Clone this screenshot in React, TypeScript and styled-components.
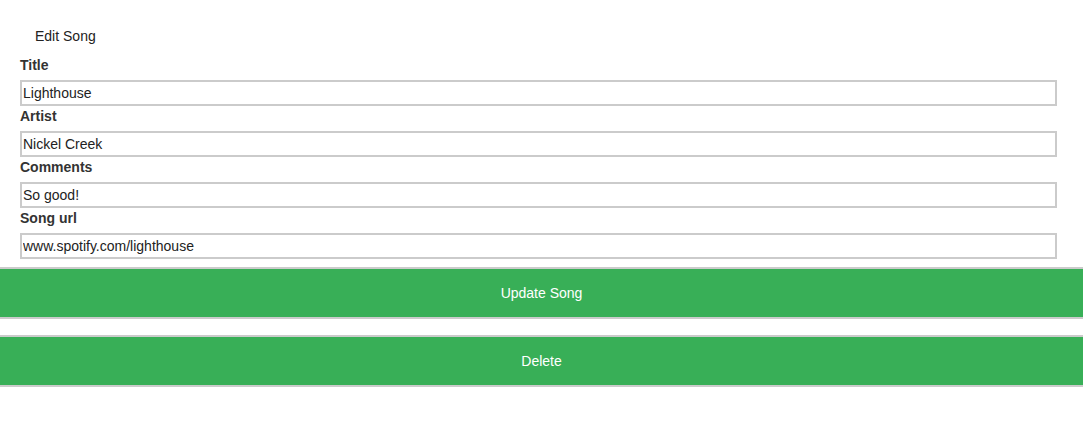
import React from "react";
import styled, { createGlobalStyle } from "styled-components";

const GlobalStyle = createGlobalStyle`
  body {
    margin: 0;
    background: #fff;
    font-family: "Liberation Sans", Arial, sans-serif;
    color: #222;
  }
`;

const Page = styled.div`
  padding-top: 28px;
`;

const Heading = styled.div`
  padding-left: 35px;
  font-size: 14px;
  line-height: 17px;
  color: #222;
`;

const Form = styled.form`
  margin-top: 11px;
  display: flex;
  flex-direction: column;
`;

const Field = styled.div`
  display: flex;
  flex-direction: column;
  padding: 0 26px 0 20px;
  margin-bottom: 1px;
`;

const Label = styled.label`
  font-size: 14px;
  line-height: 17px;
  font-weight: bold;
  color: #333;
  margin: 1px 0 6px;
`;

const Input = styled.input`
  box-sizing: border-box;
  width: 100%;
  height: 26px;
  margin: 0;
  padding: 0 1px;
  border: 2px solid #cbcbcb;
  font-family: "Liberation Sans", Arial, sans-serif;
  font-size: 14px;
  color: #222;
  background: #fff;
  outline: none;
`;

const Button = styled.button<{ $gap: number }>`
  display: block;
  width: 100%;
  height: 52px;
  margin: ${({ $gap }) => $gap}px 0 0;
  padding: 0;
  border: none;
  border-top: 2px solid #cbcbcb;
  border-bottom: 2px solid #cbcbcb;
  background: #38af57;
  color: #fff;
  font-family: "Liberation Sans", Arial, sans-serif;
  font-size: 14px;
  cursor: pointer;
`;

const fields = [
  { label: "Title", value: "Lighthouse" },
  { label: "Artist", value: "Nickel Creek" },
  { label: "Comments", value: "So good!" },
  { label: "Song url", value: "www.spotify.com/lighthouse" },
];

const App = () => (
  <>
    <GlobalStyle />
    <Page>
      <Heading>Edit Song</Heading>
      <Form onSubmit={(e) => e.preventDefault()}>
        {fields.map((f) => (
          <Field key={f.label}>
            <Label>{f.label}</Label>
            <Input defaultValue={f.value} />
          </Field>
        ))}
        <Button type="submit" $gap={7}>
          Update Song
        </Button>
        <Button type="button" $gap={16}>
          Delete
        </Button>
      </Form>
    </Page>
  </>
);

export default App;
